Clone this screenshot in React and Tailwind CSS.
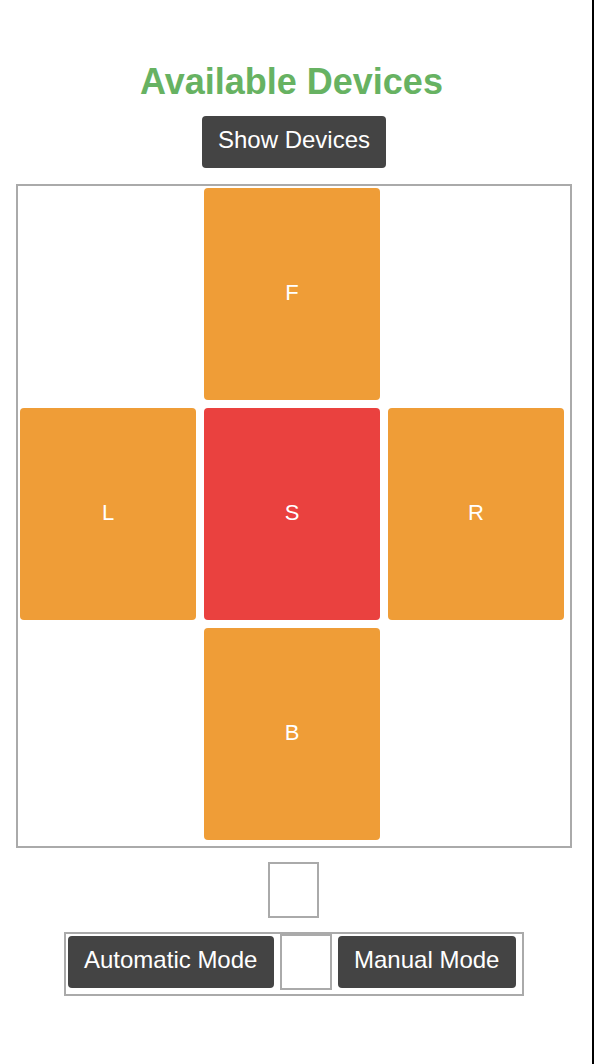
// App.jsx
const tiles = [
  { key: 'f', label: 'F', col: 'col-start-2', row: 'row-start-1', color: 'bg-[#ef9d37]' },
  { key: 'l', label: 'L', col: 'col-start-1', row: 'row-start-2', color: 'bg-[#ef9d37]' },
  { key: 's', label: 'S', col: 'col-start-2', row: 'row-start-2', color: 'bg-[#ea413f]' },
  { key: 'r', label: 'R', col: 'col-start-3', row: 'row-start-2', color: 'bg-[#ef9d37]' },
  { key: 'b', label: 'B', col: 'col-start-2', row: 'row-start-3', color: 'bg-[#ef9d37]' }
];

function DarkButton({ children, className = '' }) {
  return (
    <button
      type="button"
      className={`flex h-[52px] items-center rounded-[4px] bg-[#444444] px-4 pb-[4px] text-[24px] leading-[28px] text-white ${className}`}
    >
      {children}
    </button>
  );
}

export default function App() {
  return (
    <div
      className="flex min-h-screen w-full bg-white"
      style={{ fontFamily: '"Liberation Sans", Arial, sans-serif' }}
    >
      <main className="flex w-[588px] flex-col items-center pt-[62px]">
        <h1 className="mr-[5px] text-[36px] font-bold leading-[40px] text-[#67b262]">Available Devices</h1>

        <DarkButton className="mt-[14px]">Show Devices</DarkButton>

        <div className="mt-[16px] grid w-[556px] grid-cols-[176px_176px_176px] grid-rows-[212px_212px_212px] gap-[8px] border-2 border-[#aaaaaa] pb-[6px] pl-[2px] pr-[6px] pt-[2px]">
          {tiles.map((tile) => (
            <div
              key={tile.key}
              className={`${tile.col} ${tile.row} ${tile.color} flex items-center justify-center rounded-[4px] pb-[3px] text-[22px] text-white`}
            >
              {tile.label}
            </div>
          ))}
        </div>

        <div className="ml-[-1px] mt-[14px] h-[56px] w-[51px] border-2 border-[#aaaaaa]" />

        <div className="mt-[14px] flex items-start border-2 border-[#aaaaaa] pb-[4px]">
          <DarkButton className="ml-[2px] mt-[2px] w-[206px]">Automatic Mode</DarkButton>
          <div className="ml-[6px] h-[56px] w-[52px] border-2 border-[#aaaaaa]" />
          <DarkButton className="ml-[6px] mr-[6px] mt-[2px] w-[178px]">Manual Mode</DarkButton>
        </div>
      </main>
      <div className="w-[4px]" />
      <div className="w-[2px] bg-black" />
    </div>
  );
}
